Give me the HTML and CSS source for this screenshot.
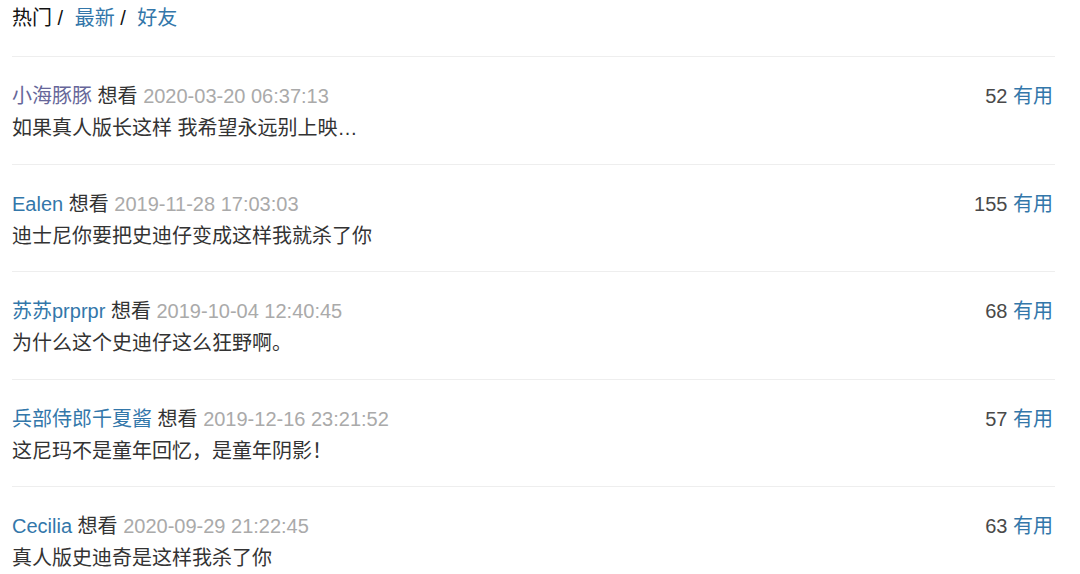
FILE: index.html
```html
<!DOCTYPE html>
<html>
<head>
  <title>短评</title>
  <link rel="stylesheet" href="styles.css">
</head>
<body>
  <div id="comments">
    <div class="tabs">
      <span class="tab-on">热门</span> / <a href="#">最新</a> / <a href="#">好友</a>
    </div>

    <div class="item">
      <div class="info">
        <span><a href="#" class="visited">小海豚豚</a> 想看 <span class="time">2020-03-20 06:37:13</span></span>
        <span class="votes">52 <a href="#">有用</a></span>
      </div>
      <p class="short">如果真人版长这样 我希望永远别上映…</p>
    </div>

    <div class="item">
      <div class="info">
        <span><a href="#">Ealen</a> 想看 <span class="time">2019-11-28 17:03:03</span></span>
        <span class="votes">155 <a href="#">有用</a></span>
      </div>
      <p class="short">迪士尼你要把史迪仔变成这样我就杀了你</p>
    </div>

    <div class="item">
      <div class="info">
        <span><a href="#">苏苏prprpr</a> 想看 <span class="time">2019-10-04 12:40:45</span></span>
        <span class="votes">68 <a href="#">有用</a></span>
      </div>
      <p class="short">为什么这个史迪仔这么狂野啊。</p>
    </div>

    <div class="item">
      <div class="info">
        <span><a href="#">兵部侍郎千夏酱</a> 想看 <span class="time">2019-12-16 23:21:52</span></span>
        <span class="votes">57 <a href="#">有用</a></span>
      </div>
      <p class="short">这尼玛不是童年回忆，是童年阴影！</p>
    </div>

    <div class="item">
      <div class="info">
        <span><a href="#">Cecilia</a> 想看 <span class="time">2020-09-29 21:22:45</span></span>
        <span class="votes">63 <a href="#">有用</a></span>
      </div>
      <p class="short">真人版史迪奇是这样我杀了你</p>
    </div>
  </div>
</body>
</html>
```

FILE: styles.css
```css
body {
  margin: 0;
  background-color: #fff;
  color: #333;
  font-family: "Liberation Sans", "Noto Sans CJK SC", sans-serif;
  font-size: 20px;
}

a {
  color: #37a;
  text-decoration: none;
}

a.visited {
  color: #669;
}

#comments {
  margin: 0 25px 0 12px;
}

.tabs {
  line-height: 36px;
  margin-bottom: 20px;
  color: #111;
}

.tabs a {
  margin-left: 6px;
}

.item {
  border-top: 1px solid #eee;
  padding: 23px 0 19.5px;
}

.info {
  display: flex;
  justify-content: space-between;
  line-height: 32px;
}

.time {
  color: #aaa;
}

.votes {
  color: #494949;
  padding-right: 2px;
}

.short {
  margin: 0;
  line-height: 32px;
  color: #333;
}
```
